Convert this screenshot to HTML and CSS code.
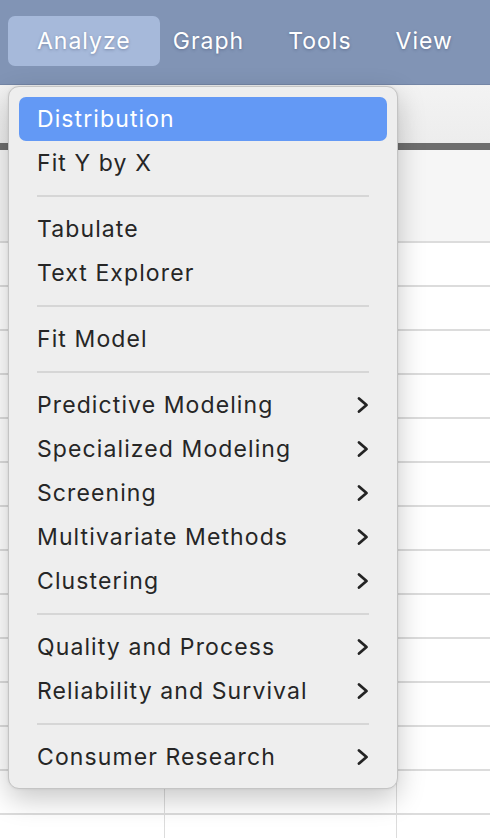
FILE: index.html
```html
<!DOCTYPE html>
<html>
<head>
<meta charset="utf-8">
<link rel="stylesheet" href="styles.css">
</head>
<body>
<div class="menubar">
  <span class="mb-item active">Analyze</span>
  <span class="mb-item first">Graph</span>
  <span class="mb-item">Tools</span>
  <span class="mb-item">View</span>
</div>
<div class="toolbar"></div>
<div class="darkbar"></div>
<div class="sheet">
  <div class="row header"><div class="c1"></div><div class="c2"></div><div class="c3"></div></div>
  <div class="row"><div class="c1"></div><div class="c2"></div><div class="c3"></div></div>
  <div class="row"><div class="c1"></div><div class="c2"></div><div class="c3"></div></div>
  <div class="row"><div class="c1"></div><div class="c2"></div><div class="c3"></div></div>
  <div class="row"><div class="c1"></div><div class="c2"></div><div class="c3"></div></div>
  <div class="row"><div class="c1"></div><div class="c2"></div><div class="c3"></div></div>
  <div class="row"><div class="c1"></div><div class="c2"></div><div class="c3"></div></div>
  <div class="row"><div class="c1"></div><div class="c2"></div><div class="c3"></div></div>
  <div class="row"><div class="c1"></div><div class="c2"></div><div class="c3"></div></div>
  <div class="row"><div class="c1"></div><div class="c2"></div><div class="c3"></div></div>
  <div class="row"><div class="c1"></div><div class="c2"></div><div class="c3"></div></div>
  <div class="row"><div class="c1"></div><div class="c2"></div><div class="c3"></div></div>
  <div class="row"><div class="c1"></div><div class="c2"></div><div class="c3"></div></div>
  <div class="row"><div class="c1"></div><div class="c2"></div><div class="c3"></div></div>
  <div class="row"><div class="c1"></div><div class="c2"></div><div class="c3"></div></div>
</div>

<div class="menu">
  <div class="item selected">Distribution</div>
  <div class="item">Fit Y by X</div>
  <div class="sep"></div>
  <div class="item">Tabulate</div>
  <div class="item">Text Explorer</div>
  <div class="sep"></div>
  <div class="item">Fit Model</div>
  <div class="sep"></div>
  <div class="item sub">Predictive Modeling<svg class="chev" viewBox="0 0 12 18"><path d="M2 2.5 L9.5 9 L2 15.5"/></svg></div>
  <div class="item sub">Specialized Modeling<svg class="chev" viewBox="0 0 12 18"><path d="M2 2.5 L9.5 9 L2 15.5"/></svg></div>
  <div class="item sub">Screening<svg class="chev" viewBox="0 0 12 18"><path d="M2 2.5 L9.5 9 L2 15.5"/></svg></div>
  <div class="item sub">Multivariate Methods<svg class="chev" viewBox="0 0 12 18"><path d="M2 2.5 L9.5 9 L2 15.5"/></svg></div>
  <div class="item sub">Clustering<svg class="chev" viewBox="0 0 12 18"><path d="M2 2.5 L9.5 9 L2 15.5"/></svg></div>
  <div class="sep"></div>
  <div class="item sub">Quality and Process<svg class="chev" viewBox="0 0 12 18"><path d="M2 2.5 L9.5 9 L2 15.5"/></svg></div>
  <div class="item sub">Reliability and Survival<svg class="chev" viewBox="0 0 12 18"><path d="M2 2.5 L9.5 9 L2 15.5"/></svg></div>
  <div class="sep"></div>
  <div class="item sub">Consumer Research<svg class="chev" viewBox="0 0 12 18"><path d="M2 2.5 L9.5 9 L2 15.5"/></svg></div>
</div>
</body>
</html>
```

FILE: styles.css
```css
html, body {
  margin: 0;
  padding: 0;
  width: 490px;
  height: 838px;
  overflow: hidden;
  background: #ffffff;
  font-family: "Inter", "Liberation Sans", sans-serif;
}

.menubar {
  height: 85px;
  background: #8194b5;
  border-bottom: 1px solid #7486a6;
  display: flex;
  align-items: flex-start;
  padding: 16px 0 0 8px;
  box-sizing: border-box;
}

.mb-item {
  color: #ffffff;
  font-size: 23px;
  letter-spacing: 1px;
  line-height: 51px;
  height: 50px;
  padding: 0 22px;
  border-radius: 7px;
  text-shadow: 0 1px 3px rgba(40, 50, 80, 0.35);
}

.mb-item.active {
  background: #a6b9da;
  padding: 0 29px;
}

.mb-item.first {
  margin-left: -9px;
}

.toolbar {
  height: 58px;
  background: linear-gradient(#f3f3f3, #ededed);
}

.darkbar {
  height: 7px;
  background: #6e6e6e;
}

.sheet {
  display: flex;
  flex-direction: column;
}

.row {
  display: grid;
  grid-template-columns: 165px 232px 1fr;
  height: 44px;
  box-sizing: border-box;
  border-bottom: 2px solid #dcdcdc;
}

.row.header {
  height: 93px;
  background: #f6f6f6;
}

.row > div {
  border-right: 1.5px solid #dcdcdc;
}

.row > .c3 {
  border-right: none;
}

.menu {
  position: absolute;
  left: 8px;
  top: 86px;
  width: 390px;
  box-sizing: border-box;
  padding: 10px 10px 9px 10px;
  background: #eeeeee;
  border: 1px solid #c4c4c4;
  border-radius: 11px;
  box-shadow: 0 10px 28px rgba(0, 0, 0, 0.22), 0 0 3px rgba(0, 0, 0, 0.08);
  display: flex;
  flex-direction: column;
}

.item {
  height: 44px;
  display: flex;
  align-items: center;
  justify-content: space-between;
  padding: 0 18px 0 18px;
  font-size: 23px;
  letter-spacing: 1.1px;
  color: #262626;
  border-radius: 7px;
}

.item.selected {
  background: #6399f5;
  color: #ffffff;
}

.chev {
  width: 12px;
  height: 18px;
  fill: none;
  stroke: #232323;
  stroke-width: 2.8;
  stroke-linecap: round;
  stroke-linejoin: round;
}

.sep {
  height: 22px;
  display: flex;
  align-items: center;
  padding: 0 18px;
}

.sep::before {
  content: "";
  display: block;
  flex: 1;
  height: 2px;
  background: #d6d6d6;
}
```
